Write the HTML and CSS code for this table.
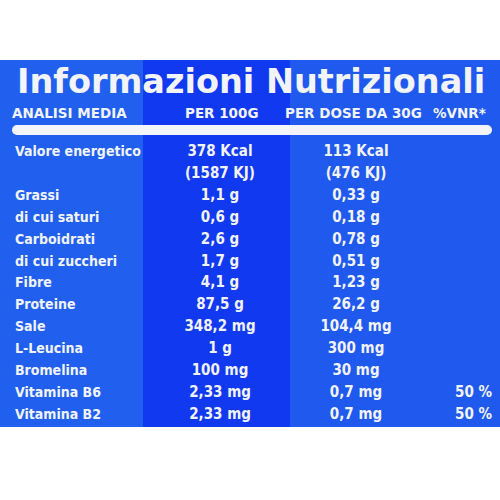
FILE: index.html
```html
<!DOCTYPE html>
<html lang="it">
<head>
<meta charset="UTF-8" />
<meta name="viewport" content="width=device-width, initial-scale=1.0" />
<title>Informazioni Nutrizionali</title>
<link rel="stylesheet" href="styles.css">
</head>
<body>

<div class="label">
  <h1>Informazioni Nutrizionali</h1>
  <div class="head">
    <span>ANALISI MEDIA</span>
    <span>PER 100G</span>
    <span>PER DOSE DA 30G</span>
    <span>%VNR*</span>
  </div>
  <div class="bar"></div>

  <div class="rows">
    <div class="row"><span>Valore energetico</span><span>378 Kcal</span><span>113 Kcal</span><span></span></div>
    <div class="row"><span></span><span>(1587 KJ)</span><span>(476 KJ)</span><span></span></div>
    <div class="row"><span>Grassi</span><span>1,1 g</span><span>0,33 g</span><span></span></div>
    <div class="row"><span>di cui saturi</span><span>0,6 g</span><span>0,18 g</span><span></span></div>
    <div class="row"><span>Carboidrati</span><span>2,6 g</span><span>0,78 g</span><span></span></div>
    <div class="row"><span>di cui zuccheri</span><span>1,7 g</span><span>0,51 g</span><span></span></div>
    <div class="row"><span>Fibre</span><span>4,1 g</span><span>1,23 g</span><span></span></div>
    <div class="row"><span>Proteine</span><span>87,5 g</span><span>26,2 g</span><span></span></div>
    <div class="row"><span>Sale</span><span>348,2 mg</span><span>104,4 mg</span><span></span></div>
    <div class="row"><span>L-Leucina</span><span>1 g</span><span>300 mg</span><span></span></div>
    <div class="row"><span>Bromelina</span><span>100 mg</span><span>30 mg</span><span></span></div>
    <div class="row"><span>Vitamina B6</span><span>2,33 mg</span><span>0,7 mg</span><span>50 %</span></div>
    <div class="row"><span>Vitamina B2</span><span>2,33 mg</span><span>0,7 mg</span><span>50 %</span></div>
  </div>
</div>

</body>
</html>
```

FILE: styles.css
```css
body {
  margin: 0;
  background-color: #fff;
  font-family: "DejaVu Sans", Verdana, sans-serif;
  font-stretch: condensed;
  font-weight: bold;
  color: #f2f4fa;
}
.label {
  margin-top: 60px;
  height: 367px;
  overflow: hidden;
  background: linear-gradient(to right, #2160ee 143px, #1139f0 143px, #1139f0 290px, #2059ee 290px);
}
h1 {
  margin: 0;
  padding: 4px 0 0 17px;
  font-size: 33.5px;
  font-stretch: normal;
  line-height: 36px;
  white-space: nowrap;
}
.head {
  display: grid;
  grid-template-columns: 173px 100px 148px 1fr;
  padding: 4px 0 0 12px;
  font-size: 13.5px;
  font-stretch: normal;
  line-height: 18px;
  white-space: nowrap;
}
.bar {
  height: 10px;
  margin: 3px 8px 0 12px;
  background-color: #f4f5fa;
  border-radius: 5px;
}
.rows {
  padding-top: 6px;
}
.row {
  display: grid;
  grid-template-columns: 15px 155px 100px 34px 104px 1fr;
  font-size: 14px;
  line-height: 21.9px;
  white-space: nowrap;
}
.row span:nth-child(1) {
  grid-column: 2;
}
.row span:nth-child(2) {
  grid-column: 3;
  text-align: center;
  font-size: 15px;
}
.row span:nth-child(3) {
  grid-column: 5;
  text-align: center;
  font-size: 15px;
}
.row span:nth-child(4) {
  grid-column: 6;
  text-align: right;
  padding-right: 8px;
  font-size: 15px;
}
```
